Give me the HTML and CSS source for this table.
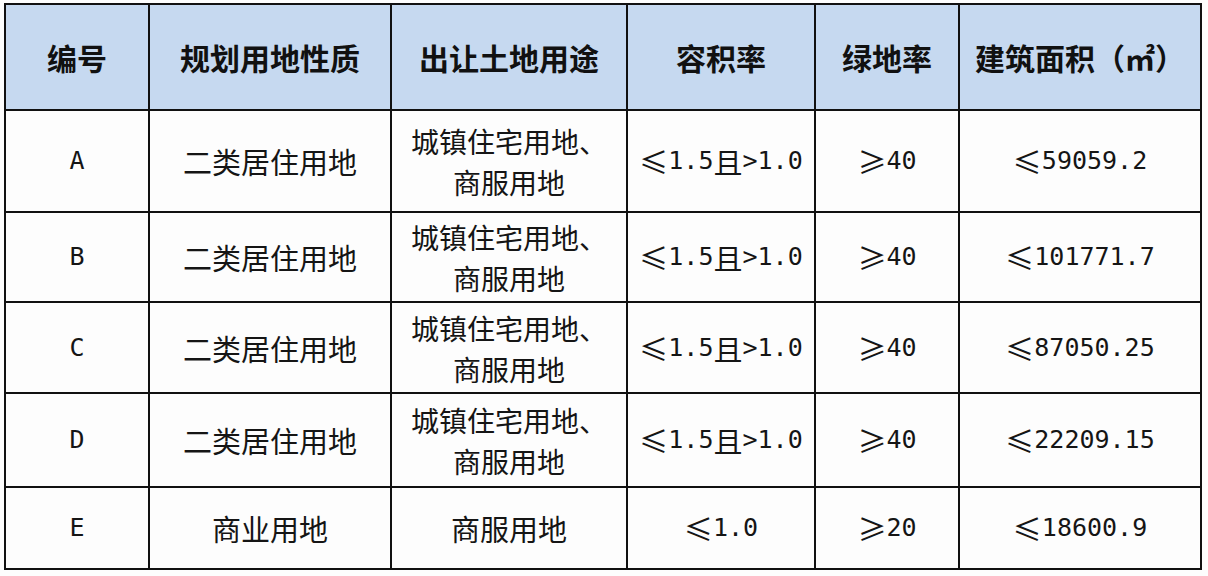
FILE: index.html
```html
<!DOCTYPE html>
<html lang="zh-CN">
<head>
<meta charset="utf-8">
<title>地块规划指标</title>
<link rel="stylesheet" href="styles.css">
</head>
<body>
<div class="sheet">
  <div class="grid">
    <div class="cell head">编号</div>
    <div class="cell head">规划用地性质</div>
    <div class="cell head">出让土地用途</div>
    <div class="cell head">容积率</div>
    <div class="cell head">绿地率</div>
    <div class="cell head">建筑面积（㎡）</div>

    <div class="cell"><span class="num">A</span></div>
    <div class="cell">二类居住用地</div>
    <div class="cell two"><span class="line">城镇住宅用地、</span><span class="line">商服用地</span></div>
    <div class="cell"><span class="op">≤</span><span class="num">1.5</span>且<span class="num">&gt;1.0</span></div>
    <div class="cell"><span class="op">≥</span><span class="num">40</span></div>
    <div class="cell"><span class="op">≤</span><span class="num">59059.2</span></div>

    <div class="cell"><span class="num">B</span></div>
    <div class="cell">二类居住用地</div>
    <div class="cell two"><span class="line">城镇住宅用地、</span><span class="line">商服用地</span></div>
    <div class="cell"><span class="op">≤</span><span class="num">1.5</span>且<span class="num">&gt;1.0</span></div>
    <div class="cell"><span class="op">≥</span><span class="num">40</span></div>
    <div class="cell"><span class="op">≤</span><span class="num">101771.7</span></div>

    <div class="cell"><span class="num">C</span></div>
    <div class="cell">二类居住用地</div>
    <div class="cell two"><span class="line">城镇住宅用地、</span><span class="line">商服用地</span></div>
    <div class="cell"><span class="op">≤</span><span class="num">1.5</span>且<span class="num">&gt;1.0</span></div>
    <div class="cell"><span class="op">≥</span><span class="num">40</span></div>
    <div class="cell"><span class="op">≤</span><span class="num">87050.25</span></div>

    <div class="cell"><span class="num">D</span></div>
    <div class="cell">二类居住用地</div>
    <div class="cell two"><span class="line">城镇住宅用地、</span><span class="line">商服用地</span></div>
    <div class="cell"><span class="op">≤</span><span class="num">1.5</span>且<span class="num">&gt;1.0</span></div>
    <div class="cell"><span class="op">≥</span><span class="num">40</span></div>
    <div class="cell"><span class="op">≤</span><span class="num">22209.15</span></div>

    <div class="cell"><span class="num">E</span></div>
    <div class="cell">商业用地</div>
    <div class="cell">商服用地</div>
    <div class="cell"><span class="op">≤</span><span class="num">1.0</span></div>
    <div class="cell"><span class="op">≥</span><span class="num">20</span></div>
    <div class="cell"><span class="op">≤</span><span class="num">18600.9</span></div>
  </div>
</div>
</body>
</html>
```

FILE: styles.css
```css
html, body {
  margin: 0;
  padding: 0;
  background: #fdfdfd;
}

.sheet {
  padding: 3px 0 0 4px;
}

.grid {
  display: grid;
  grid-template-columns: 144px 242px 236px 188px 144px 242px;
  grid-template-rows: 106px 102px 90px 91px 94px 82px;
  width: 1196px;
  border-left: 2px solid #111;
  border-top: 2px solid #111;
  font-family: "Noto Sans CJK SC", "Noto Sans", sans-serif;
  color: #151515;
}

.cell {
  box-sizing: border-box;
  border-right: 2px solid #111;
  border-bottom: 2px solid #111;
  display: flex;
  align-items: center;
  justify-content: center;
  text-align: center;
  font-size: 29px;
  line-height: 42px;
  background: #fdfdfd;
}

.cell.head {
  background: #c6d9f0;
  font-weight: 700;
  font-size: 30px;
  color: #111;
}

.cell.two {
  flex-direction: column;
  font-size: 28px;
  line-height: 41px;
  padding-top: 2px;
}

.line {
  display: block;
}

.num {
  font-family: "DejaVu Sans Mono", "Liberation Mono", monospace;
  font-size: 25px;
}

.op {
  font-family: "Noto Sans CJK SC", sans-serif;
  font-size: 29px;
}
```
